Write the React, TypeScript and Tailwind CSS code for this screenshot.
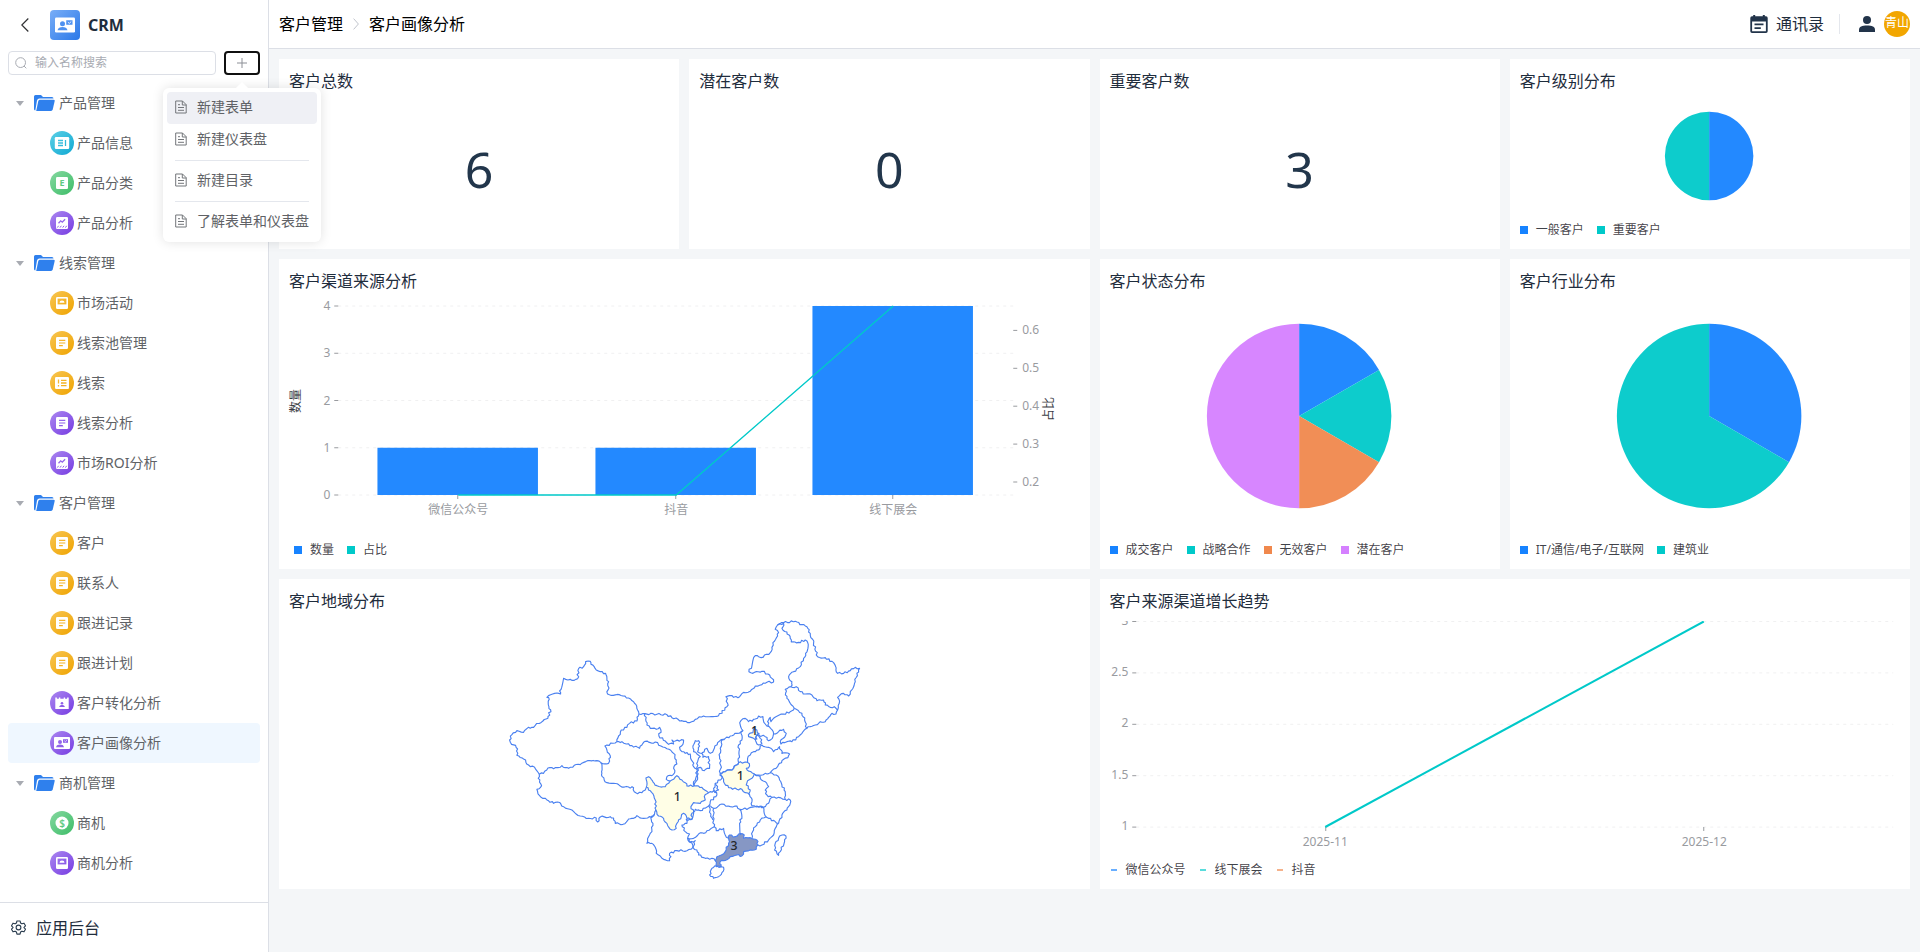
import { useState } from 'react';
import { clsx } from 'clsx';

type Tone = 'cyan' | 'green' | 'purple' | 'orange';
type Glyph = 'info' | 'letter' | 'trend' | 'board' | 'form' | 'list' | 'calendar' | 'card' | 'money';

interface MenuEntry {
  name: string;
  tone: Tone;
  glyph: Glyph;
}

interface MenuGroup {
  name: string;
  children: MenuEntry[];
}

interface LegendItem {
  name: string;
  color: string;
}

interface Slice extends LegendItem {
  value: number;
}

const BLUE = '#1783ff';
const TEAL = '#00c9c9';
const ORANGE = '#f0884d';
const PURPLE = '#d580ff';

const tones: Record<Tone, [string, string]> = {
  cyan: ['#5cd0e6', '#0fa8d2'],
  green: ['#86d8a0', '#3dbd68'],
  purple: ['#ab88f0', '#763be2'],
  orange: ['#f8c653', '#efa300'],
};

const groups: MenuGroup[] = [
  {
    name: '产品管理',
    children: [
      { name: '产品信息', tone: 'cyan', glyph: 'info' },
      { name: '产品分类', tone: 'green', glyph: 'letter' },
      { name: '产品分析', tone: 'purple', glyph: 'trend' },
    ],
  },
  {
    name: '线索管理',
    children: [
      { name: '市场活动', tone: 'orange', glyph: 'board' },
      { name: '线索池管理', tone: 'orange', glyph: 'form' },
      { name: '线索', tone: 'orange', glyph: 'list' },
      { name: '线索分析', tone: 'purple', glyph: 'form' },
      { name: '市场ROI分析', tone: 'purple', glyph: 'trend' },
    ],
  },
  {
    name: '客户管理',
    children: [
      { name: '客户', tone: 'orange', glyph: 'form' },
      { name: '联系人', tone: 'orange', glyph: 'form' },
      { name: '跟进记录', tone: 'orange', glyph: 'form' },
      { name: '跟进计划', tone: 'orange', glyph: 'form' },
      { name: '客户转化分析', tone: 'purple', glyph: 'calendar' },
      { name: '客户画像分析', tone: 'purple', glyph: 'card' },
    ],
  },
  {
    name: '商机管理',
    children: [
      { name: '商机', tone: 'green', glyph: 'money' },
      { name: '商机分析', tone: 'purple', glyph: 'board' },
    ],
  },
];

// ---------- icons ----------

function CardGlyph({ color }: { color: string }) {
  return (
    <>
      <rect x="4" y="6" width="16" height="12" rx="1" fill="#fff" />
      <circle cx="10" cy="11" r="2" fill={color} />
      <path d="M6 16.2c.4-2 2-2.7 4-2.7s3.6.7 4 2.7z" fill={color} />
      <rect x="13" y="8.2" width="5" height="3.6" fill={color} />
      <path d="M14.3 9.7l1.1 1 1.6-1.5" fill="none" stroke="#fff" strokeWidth=".7" />
    </>
  );
}

function GlyphShape({ glyph, color }: { glyph: Glyph; color: string }) {
  const sheet = <rect x="6" y="6" width="12" height="12" rx="1.2" fill="#fff" />;
  switch (glyph) {
    case 'info':
      return (
        <>
          <rect x="4.8" y="6" width="14.4" height="12" rx="1.2" fill="#fff" />
          <path d="M8 9.5h5M8 12h5M8 14.5h5M15.5 9v6" stroke={color} strokeWidth="1.3" />
        </>
      );
    case 'letter':
      return (
        <>
          {sheet}
          <text x="12" y="15.3" fontSize="9" fontWeight="700" textAnchor="middle" fill={color}>E</text>
        </>
      );
    case 'trend':
      return (
        <>
          {sheet}
          <path d="M8.5 12.2l2.2-2.4 1.6 1.4 2.8-3" fill="none" stroke={color} strokeWidth="1.3" />
          <path d="M7.3 16.6l1.3-1.8M10 16.6l1.3-1.8M12.7 16.6l1.3-1.8M15.4 16.6l1.3-1.8" stroke={color} strokeWidth="1" />
        </>
      );
    case 'board':
      return (
        <>
          {sheet}
          <rect x="7.6" y="7.6" width="8.8" height="5.8" fill={color} />
          <path d="M9.5 11.8a2.5 2.3 0 0 1 5 0z" fill="#fff" />
        </>
      );
    case 'form':
      return (
        <>
          {sheet}
          <path d="M9 9.3h6.3M9 12h6.3M9 14.7h3.8" stroke={color} strokeWidth="1.2" />
        </>
      );
    case 'list':
      return (
        <>
          <rect x="5" y="6" width="14" height="12" rx="1.2" fill="#fff" />
          <path d="M8.5 8.5v4M8.5 14v1.5M11 9.3h5.5M11 12h5.5M11 14.7h5.5" stroke={color} strokeWidth="1.3" />
        </>
      );
    case 'calendar':
      return (
        <>
          <path d="M5.3 6.5h1.6v1.3h2V6.5h1.4v1.3h3.4V6.5h1.4v1.3h2V6.5h1.6V18H5.3z" fill="#fff" />
          <circle cx="12" cy="12.2" r="1.3" fill={color} />
          <path d="M9.2 16c.3-1.5 1.4-1.9 2.8-1.9s2.5.4 2.8 1.9z" fill={color} />
        </>
      );
    case 'card':
      return <CardGlyph color={color} />;
    case 'money':
      return (
        <>
          <circle cx="12" cy="12" r="6.5" fill="#fff" />
          <text x="12" y="15.5" fontSize="10" fontWeight="600" textAnchor="middle" fill={color}>$</text>
        </>
      );
  }
}

function EntryIcon({ tone, glyph }: { tone: Tone; glyph: Glyph }) {
  const [from, to] = tones[tone];
  const id = `tone-${tone}`;
  return (
    <svg viewBox="0 0 24 24" className="size-6 shrink-0" aria-hidden="true">
      <defs>
        <linearGradient id={id} x1="0" y1="0" x2="24" y2="24" gradientUnits="userSpaceOnUse">
          <stop offset="0" stopColor={from} />
          <stop offset="1" stopColor={to} />
        </linearGradient>
      </defs>
      <circle cx="12" cy="12" r="12" fill={`url(#${id})`} />
      <GlyphShape glyph={glyph} color={`url(#${id})`} />
    </svg>
  );
}

function FolderIcon() {
  return (
    <svg viewBox="0 0 21 16" className="h-4 w-[21px] shrink-0" aria-hidden="true">
      <path d="M0 1.5Q0 0 1.5 0H7l2 2h9q1.5 0 1.5 1.5H5.5Q3.5 3.5 3 5.5L1.3 15.5Q0 15.3 0 14z" fill="#2f80ed" />
      <path d="M4.3 6Q4.7 4.7 6 4.7h13.5q1.5 0 1.2 1.4l-2 8.5Q18.3 16 17 16H2.2z" fill="#2f80ed" />
    </svg>
  );
}

function DocIcon() {
  return (
    <svg viewBox="0 0 12 14" className="h-3.5 w-3 shrink-0" fill="none" stroke="#73767a" strokeWidth="1" aria-hidden="true">
      <path d="M.7 1h6.8l3.7 3.7V13H.7zM7.3 1v4h4M3 7.500h6M3 10.300h6M3 4.700h2" />
    </svg>
  );
}

function GearIcon() {
  return (
    <svg viewBox="0 0 24 24" className="size-[15px]" fill="none" stroke="#2c3e50" strokeWidth="1.8" strokeLinejoin="round" aria-hidden="true">
      <path d="M9.5 1.5h5l.8 3.3 2.2 1.3 3.3-1 2.4 4.2-2.4 2.4v.6l2.4 2.4-2.4 4.2-3.3-1-2.2 1.3-.8 3.3h-5l-.8-3.3-2.2-1.3-3.3 1L.8 14.7l2.4-2.4v-.6L.8 9.300l2.4-4.2 3.3 1 2.2-1.3z" />
      <circle cx="12" cy="12" r="3.8" />
    </svg>
  );
}

// ---------- sidebar ----------

function CreateMenu() {
  const rows = [['新建表单', '新建仪表盘'], ['新建目录'], ['了解表单和仪表盘']];
  return (
    <div className="absolute top-full left-1/2 z-20 mt-[13px] w-max -translate-x-1/2 rounded-md bg-white p-1 shadow-[0_0_12px_rgba(0,0,0,0.12)]">
      <span className="absolute -top-1 left-1/2 size-2.5 -translate-x-1/2 rotate-45 bg-white" />
      {rows.map((section, i) => (
        <div key={section[0]} className="relative">
          {i > 0 && <hr className="mx-2 my-1 border-[#e4e7ed]" />}
          {section.map((label) => (
            <button
              key={label}
              type="button"
              className={clsx(
                'flex h-8 w-full items-center gap-2.5 rounded px-2 pb-0.5 text-sm leading-5 text-[#606266]',
                label === '新建表单' && 'bg-[#eff0f5]',
              )}
            >
              <DocIcon />
              {label}
            </button>
          ))}
        </div>
      ))}
    </div>
  );
}

function Sidebar() {
  const [active, setActive] = useState('客户画像分析');

  return (
    <aside className="flex w-[269px] shrink-0 flex-col border-r border-[#dcdfe6] bg-white">
      <div className="flex h-[50px] shrink-0 items-center gap-2 pr-2 pl-4">
        <button type="button" aria-label="返回" className="mr-2 flex w-[18px] justify-center">
          <svg viewBox="0 0 8 14" className="h-3.5 w-2" fill="none" stroke="#303133" strokeWidth="1.2" aria-hidden="true">
            <path d="M7.3.5L.8 7l6.5 6.5" />
          </svg>
        </button>
        <svg viewBox="0 0 30 30" className="size-[30px]" aria-hidden="true">
          <defs>
            <linearGradient id="logo" x1="0" y1="0" x2="1" y2="1">
              <stop offset="0" stopColor="#79aef7" />
              <stop offset="1" stopColor="#2b78e8" />
            </linearGradient>
          </defs>
          <rect width="30" height="30" rx="4" fill="url(#logo)" />
          <g transform="scale(1.25)">
            <CardGlyph color="#4f91f0" />
          </g>
        </svg>
        <span className="text-base leading-6 font-bold text-[#1f2d3d]">CRM</span>
      </div>

      <div className="mb-2 flex shrink-0 gap-2 px-2 pt-px">
        <label className="flex h-6 min-w-0 flex-1 items-center gap-2 rounded border border-[#dcdfe6] px-1.5">
          <svg viewBox="0 0 12 12" className="size-3 shrink-0" fill="none" stroke="#a8abb2" strokeWidth="1" aria-hidden="true">
            <circle cx="5.6" cy="5.6" r="4.9" />
            <path d="M9 9l2.3 2.3" />
          </svg>
          <input
            type="text"
            aria-label="输入名称搜索"
            placeholder="输入名称搜索"
            className="w-full min-w-0 text-xs leading-4 outline-none placeholder:text-[#a8abb2]"
          />
        </label>
        <div className="relative">
          <button
            type="button"
            aria-label="新建"
            aria-haspopup="menu"
            className="flex h-6 w-9 items-center justify-center rounded border-2 border-[#101010]"
          >
            <svg viewBox="0 0 10 10" className="size-2.5" stroke="#8c8f96" strokeWidth="1" aria-hidden="true">
              <path d="M5 0v10M0 5h10" />
            </svg>
          </button>
          <CreateMenu />
        </div>
      </div>

      <nav className="min-h-0 flex-1 px-2">
        {groups.map((group) => (
          <div key={group.name}>
            <button type="button" className="flex h-10 w-full items-center pl-2 text-sm leading-5 text-[#606266]">
              <svg viewBox="0 0 8 5" className="mr-2.5 h-[5px] w-2" aria-hidden="true">
                <path d="M0 0h8L4 5z" fill="#a8abb2" />
              </svg>
              <FolderIcon />
              <span className="ml-1">{group.name}</span>
            </button>
            {group.children.map((entry) => (
              <a
                key={entry.name}
                href="#"
                onClick={(e) => {
                  e.preventDefault();
                  setActive(entry.name);
                }}
                className={clsx(
                  'flex h-10 items-center gap-[3px] rounded pl-[42px] text-sm leading-5 text-[#606266]',
                  active === entry.name && 'bg-[#eff7ff]',
                )}
              >
                <EntryIcon tone={entry.tone} glyph={entry.glyph} />
                {entry.name}
              </a>
            ))}
          </div>
        ))}
      </nav>

      <button type="button" className="flex h-[50px] shrink-0 items-center gap-2.5 border-t border-[#dcdfe6] pl-[11px] text-base leading-6 text-[#1f2d3d]">
        <GearIcon />
        应用后台
      </button>
    </aside>
  );
}

// ---------- header ----------

function Header() {
  return (
    <header className="flex h-[49px] shrink-0 items-center justify-between border-b border-[#dcdfe6] bg-white px-2.5">
      <div className="flex items-center gap-2.5 text-base leading-6 text-black">
        <a href="#">客户管理</a>
        <svg viewBox="0 0 6 12" className="h-3 w-1.5" fill="none" stroke="#c0c4cc" aria-hidden="true">
          <path d="M.6.6L5.4 6 .6 11.4" />
        </svg>
        <span>客户画像分析</span>
      </div>
      <div className="flex items-center">
        <a href="#" className="flex items-center gap-2 text-base leading-6 text-[#1f2d3d]">
          <svg viewBox="0 0 18 18" className="size-[18px]" fill="#22344a" aria-hidden="true">
            <path fillRule="evenodd" d="M3.2 0h2v1.3h7.6V0h2v1.3H16q1.7 0 1.7 1.7v13.2Q17.7 18 16 18H2Q.3 18 .3 16.200V3Q.3 1.300 2 1.300h1.2zM2.100 6.500v9.7h13.8V6.500zM4.500 8.600h9v1.7h-9zM4.500 12.200h6.3v1.7H4.500z" />
          </svg>
          通讯录
        </a>
        <span className="mr-[19px] ml-[15px] h-5 w-px bg-[#e4e7ed]" />
        <svg viewBox="0 0 16 16" className="mr-[9px] size-4" fill="#22344a" aria-hidden="true">
          <circle cx="8" cy="4" r="4" />
          <path d="M0 16v-2.2C0 10.8 3 9.500 8 9.500s8 1.3 8 4.3V16z" />
        </svg>
        <button type="button" className="flex size-[26px] items-center justify-center rounded-full bg-[#f2a600] pb-0.5 text-xs leading-4 text-white">
          青山
        </button>
      </div>
    </header>
  );
}

// ---------- dashboard pieces ----------

function Card({ title, className, children }: { title: string; className?: string; children: React.ReactNode }) {
  return (
    <section className={clsx('flex min-w-0 flex-col bg-white px-2.5 pt-2.5 pb-[9px]', className)}>
      <h2 className="text-base leading-6 text-[#1f2d3d]">{title}</h2>
      {children}
    </section>
  );
}

function Stat({ value }: { value: number }) {
  return (
    <div className="flex flex-1 items-center justify-center pt-1 text-[50px] leading-[72px] text-[#22364b]">{value}</div>
  );
}

function Legend({ items, marker = 'square', className }: { items: LegendItem[]; marker?: 'square' | 'dash'; className?: string }) {
  return (
    <ul className={clsx('mt-px flex gap-[13px] text-xs leading-5 text-[#1d2129]/85', className)}>
      {items.map((item) => (
        <li key={item.name} className="flex items-center gap-2">
          <svg viewBox="0 0 8 8" className="size-2" fill={item.color} aria-hidden="true">
            {marker === 'square' ? <rect width="8" height="8" /> : <rect x="1" y="3" width="6" height="2" opacity=".65" />}
          </svg>
          {item.name}
        </li>
      ))}
    </ul>
  );
}

function Pie({ slices, height, className }: { slices: Slice[]; height: number; className: string }) {
  const radius = height * 0.375 - (height < 200 ? 3 : 0);
  const total = slices.reduce((sum, s) => sum + s.value, 0);
  const point = (v: number) => {
    const angle = (v / total) * Math.PI * 2 - Math.PI / 2;
    return `${Math.cos(angle) * radius} ${Math.sin(angle) * radius}`;
  };
  let start = 0;
  return (
    <svg className={clsx('w-full', className)} viewBox={`-99 ${-height / 2} 200 ${height}`}>
      {slices.map((s) => {
        const end = start + s.value;
        const large = s.value / total > 0.5 ? 1 : 0;
        const d = `M0 0L${point(start)}A${radius} ${radius} 0 ${large} 1 ${point(end)}Z`;
        start = end;
        return <path key={s.name} d={d} fill={s.color} fillOpacity=".95" />;
      })}
    </svg>
  );
}

const channels = [
  { name: '微信公众号', count: 1 },
  { name: '抖音', count: 1 },
  { name: '线下展会', count: 4 },
];

function ChannelChart() {
  const base = 202;
  const unit = 47.25;
  const centers = [169, 387, 604];
  return (
    <svg viewBox="0 0 790 246" className="h-[246px] w-full overflow-visible" fontSize="12">
      {[0, 1, 2, 3, 4].map((v) => {
        const y = base - v * unit;
        return (
          <g key={v}>
            <path d={`M49 ${y}H724`} stroke="#f0f0f1" strokeDasharray="3 4" />
            <path d={`M45 ${y}h4`} stroke="#999b9f" />
            <text x="41" y={y + 4} textAnchor="end" fill="#999b9f">{v}</text>
          </g>
        );
      })}
      {[0.2, 0.3, 0.4, 0.5, 0.6].map((v, i) => {
        const y = 189 - i * 37.9;
        return (
          <g key={v}>
            <path d={`M724 ${y}h4`} stroke="#999b9f" />
            <text x="733" y={y + 4} fill="#999b9f">{v}</text>
          </g>
        );
      })}
      {channels.map((c, i) => (
        <g key={c.name}>
          <rect x={centers[i] - 80.8} y={base - c.count * unit} width="160.5" height={c.count * unit} fill={BLUE} fillOpacity=".95" />
          <path d={`M${centers[i] - 0.5} ${base}v4`} stroke="#999b9f" />
          <text x={centers[i]} y="221" textAnchor="middle" fill="#999b9f">{c.name}</text>
        </g>
      ))}
      <path d={`M169 ${base}H387L604 13`} fill="none" stroke={TEAL} strokeWidth="1.4" />
      <text transform="translate(11 108) rotate(-90)" textAnchor="middle" fill="#3a3d44">数量</text>
      <text transform="translate(764 116) rotate(-90)" textAnchor="middle" fill="#3a3d44">占比</text>
    </svg>
  );
}

function TrendChart() {
  return (
    <svg viewBox="0 0 790 238" className="mt-2 h-[238px] w-full overflow-hidden" fontSize="12">
      {[3, 2.5, 2, 1.5, 1].map((v, i) => {
        const y = 0.5 + i * 51.4;
        return (
          <g key={v}>
            <path d={`M26 ${y}H783`} stroke="#f0f0f1" strokeDasharray="3 4" />
            <path d={`M22 ${y}h4`} stroke="#999b9f" />
            <text x="18" y={y + 3} textAnchor="end" fill="#999b9f">{v}</text>
          </g>
        );
      })}
      <path d="M215.5 206v4M593.5 206v4" stroke="#999b9f" />
      <text x="215" y="225" textAnchor="middle" fill="#999b9f">2025-11</text>
      <text x="594" y="225" textAnchor="middle" fill="#999b9f">2025-12</text>
      <path d="M215 206L593.5 0.5" fill="none" stroke={TEAL} strokeWidth="2" />
    </svg>
  );
}

// ---------- map ----------

// Province borders as point lists, three units to a pixel.
const borders = [
  // 新疆
  '263,153 256,155 250,170 235,176 232,206 222,211 210,208 190,205 178,243 181,252 170,249 140,262 147,268 146,290 151,299 143,325 128,333 105,346 100,352 85,352 70,367 50,362 35,374 28,390 34,403 46,406 52,417 50,436 70,447 85,465 103,472 117,493 130,490 143,474 160,476 185,467 205,475 222,466 240,464 262,452 290,452 302,458 325,460 326,446 330,437 320,420 314,408 350,395 355,378 363,360 380,352 388,340 410,333 416,312 412,300 400,275 385,264 368,258 322,252 325,215 320,205 316,190 300,185 288,180 272,163 270,154 263,153',
  // 西藏
  '117,493 114,505 124,527 110,538 118,557 140,570 160,580 172,576 190,590 215,600 240,618 265,625 288,624 292,636 300,621 330,620 340,624 345,640 368,643 385,627 400,625 410,617 430,625 447,620 455,622 463,612 467,600',
  '438,532 435,540 425,548 412,551 402,545 400,533 385,531 360,528 340,520 320,518 306,500 304,485 302,458',
  // 青海
  '350,395 365,395 378,402 395,407 418,415 428,400 435,394 450,398 465,396 482,408 500,416 520,430 528,450 530,462 520,475 524,482 515,497 500,500 498,508 510,513',
  // 甘肃
  '416,312 434,311 440,345 450,355 468,358 478,352 482,360 476,378 495,393 505,403 520,402 515,390 525,393 550,390 548,403 538,412 545,425 555,430 570,432 577,455 580,470 590,478 588,500 580,515 582,528',
  // 宁夏
  '590,478 592,455 600,440 590,432 580,425 578,408 585,392 595,392 598,408 592,425 605,430 608,442 625,440 628,475 612,482 600,472 590,478',
  // 陕西
  '592,475 592,508 582,528',
  '605,428 620,415 630,430 640,420 652,398 670,388 665,390 660,415 658,440 661,465 660,490 665,505 645,520 640,535 650,548',
  // 内蒙古
  '434,311 500,314 515,323 545,332 568,338 585,328 610,318 655,317 680,290 682,280 677,260 688,257 713,263 730,247 750,244 765,228 785,224 800,217 820,216 815,205 803,192 785,184 758,190 746,185 755,168 765,137 775,140 783,143 810,128 815,112 818,98 832,78 835,68 825,58 832,45 850,40 845,55 860,66 870,85 873,96 895,97 915,90 924,103 916,130 910,145 900,170 880,185 865,200 875,215 872,230 855,238 860,265 870,280 882,295',
  '882,295 870,305 850,312 820,325 812,335 810,322 802,335 807,350',
  // 黑龙江
  '832,45 850,38 885,34 905,44 920,50 930,70 940,100 952,140 975,143 1000,158 1007,180 1012,190 1030,190 1050,182 1065,172 1078,175 1070,190 1065,215 1050,245 1045,258 1030,250 1012,262 1017,280 1012,300 1002,290 990,292 975,285 970,270 950,272 935,255 915,252 900,245 888,230 872,230',
  // 吉林
  '1012,300 1007,312 995,310 985,322 975,335 960,335 945,345 930,350 920,355 913,330 905,310 888,298 882,295',
  // 辽宁
  '920,355 905,370 895,380 875,395 860,395 842,402 840,395 858,370 850,358 835,365 820,372 807,350',
  // 河北
  '820,372 818,380 805,392 795,380 775,375 770,372',
  '807,350 795,342 788,320 775,318 765,327 745,335 735,325 722,332 720,345 728,362 710,370 690,378 665,390',
  '770,375 780,385 785,400 775,405 766,392 770,375',
  // 山西
  '660,490 675,485 700,475 715,458 716,430 715,405 725,390 722,370 728,362',
  // 山东
  '785,405 805,412 820,425 832,418 838,410 845,430 868,432 863,443 845,452 832,470 815,482 810,488 795,490 775,495 762,492',
  '742,457 742,445 750,435 760,425 775,420 785,405',
  // 江苏
  '762,492 775,497 780,505 795,515 805,530 795,540 800,555 815,562 835,562 855,568',
  '810,488 828,495 838,510 845,525 855,545 855,568 870,570 870,580 860,600 845,615 835,640',
  // 安徽
  '748,555 755,575 755,587 775,590 790,592 805,580 815,562',
  // 浙江
  '790,592 792,610 805,625 825,635 835,640',
  // 福建
  '798,620 780,630 765,650 757,665 755,685',
  '835,640 825,655 820,675 805,690 785,705 773,705',
  // 江西
  '718,598 725,620 718,640 722,675',
  '718,598 745,595 770,588 790,592',
  // 湖北
  '645,520 655,540 645,545 650,555 630,575 625,588 640,595 665,582 690,590 710,588 718,598',
  // 湖南
  '640,595 638,620 642,650 648,662 670,655 675,675 685,685',
  // 重庆
  '625,548 640,542 650,548',
  '625,588 600,602 585,598 575,610 575,628',
  // 贵州
  '625,588 632,612 638,630',
  '642,650 610,670 595,672 580,685 562,685',
  // 广西
  '562,685 570,698 585,692 578,712 590,720 595,735 615,745 635,745 645,752',
  // 云南
  '463,612 452,625 458,640 455,665 445,680 440,700 455,700 465,712 468,730 480,738 490,748 508,752 512,740 508,730 530,722 560,722 578,712 570,695 562,685 568,672 555,665 545,645 560,640 558,628 575,628',
  // 海南
  '635,775 650,768 670,772 665,788 655,800 640,805 628,795 635,775',
  // 台湾
  '845,675 857,678 853,695 840,725 835,736 823,720 825,700 835,685 845,675',
];

const regions = [
  {
    name: '四川',
    value: 1,
    fill: '#fffee6',
    label: [531, 572],
    points: '438,532 437,504 445,500 453,508 462,520 470,527 495,530 505,520 510,513 520,508 530,497 545,510 555,518 560,528 582,528 605,532 625,548 612,560 615,570 600,580 580,578 572,590 580,605 575,628 560,625 550,610 543,620 530,640 528,655 515,660 500,640 490,625 475,618 467,600 465,570 450,542 438,532',
  },
  {
    name: '河南',
    value: 1,
    fill: '#fffee6',
    label: [720, 509],
    points: '660,490 675,485 700,475 715,458 742,457 748,468 738,475 755,488 762,492 755,505 742,512 738,525 750,540 748,555 735,548 725,538 710,538 685,533 670,515 660,490',
  },
  {
    name: '北京',
    value: 1,
    fill: '#fffee6',
    label: [763, 375],
    points: '760,355 770,360 777,372 768,378 770,387 760,385 745,380 748,370 758,368 760,355',
  },
  {
    name: '广东',
    value: 3,
    fill: '#8697c4',
    label: [701, 721],
    points: '685,685 688,675 705,680 715,672 732,675 730,685 750,683 770,690 773,705 768,718 750,720 730,725 725,738 710,735 690,740 670,752 660,755 662,770 648,770 645,752 650,740 675,725 685,700 685,685',
  },
];

// Splits each segment and nudges the joints, so that shared borders get the same ragged edge.
function ragged(points: string): string {
  const list = points.split(' ').map((p) => p.split(',').map(Number));
  const out = [list[0]];
  for (let i = 1; i < list.length; i++) {
    const [ax, ay] = list[i - 1];
    const [bx, by] = list[i];
    const len = Math.hypot(bx - ax, by - ay);
    const steps = Math.max(1, Math.round(len / 6));
    for (let k = 1; k < steps; k++) {
      const x = ax + ((bx - ax) * k) / steps;
      const y = ay + ((by - ay) * k) / steps;
      const shift = Math.sin(x * 12.9 + y * 78.2) * 2.8;
      out.push([x - ((by - ay) / len) * shift, y + ((bx - ax) / len) * shift]);
    }
    out.push([bx, by]);
  }
  return 'M' + out.map(([x, y]) => `${x.toFixed(1)} ${y.toFixed(1)}`).join('L');
}

function ChinaMap() {
  return (
    <svg viewBox="-633 9 2370 798" className="h-[266px] w-full" fontSize="37">
      <g stroke="#4a80f0" strokeWidth="3.4" strokeLinejoin="round" fill="none">
        {regions.map((r) => (
          <path key={r.name} d={ragged(r.points)} fill={r.fill} />
        ))}
        {borders.map((b) => (
          <path key={b} d={ragged(b)} />
        ))}
      </g>
      {regions.map((r) => (
        <text key={r.name} x={r.label[0]} y={r.label[1]} textAnchor="middle" fontWeight="500" fill="#26282c">
          {r.value}
        </text>
      ))}
    </svg>
  );
}

// ---------- page ----------

const levels: Slice[] = [
  { name: '一般客户', color: BLUE, value: 1 },
  { name: '重要客户', color: TEAL, value: 1 },
];

const states: Slice[] = [
  { name: '成交客户', color: BLUE, value: 1 },
  { name: '战略合作', color: TEAL, value: 1 },
  { name: '无效客户', color: ORANGE, value: 1 },
  { name: '潜在客户', color: PURPLE, value: 3 },
];

const industries: Slice[] = [
  { name: 'IT/通信/电子/互联网', color: BLUE, value: 1 },
  { name: '建筑业', color: TEAL, value: 2 },
];

export default function App() {
  return (
    <div className="flex h-screen min-h-fit bg-[#f4f6f8] font-['Noto_Sans','Noto_Sans_CJK_SC',sans-serif]">
      <Sidebar />
      <div className="flex min-w-0 flex-1 flex-col">
        <Header />
        <main className="grid grid-cols-4 gap-2.5 p-2.5">
          <Card title="客户总数"><Stat value={6} /></Card>
          <Card title="潜在客户数"><Stat value={0} /></Card>
          <Card title="重要客户数"><Stat value={3} /></Card>
          <Card title="客户级别分布">
            <Pie slices={levels} height={126} className="h-[126px]" />
            <Legend items={levels} />
          </Card>

          <Card title="客户渠道来源分析" className="col-span-2">
            <ChannelChart />
            <Legend items={[{ name: '数量', color: BLUE }, { name: '占比', color: TEAL }]} className="pl-[5px]" />
          </Card>
          <Card title="客户状态分布">
            <Pie slices={states} height={246} className="h-[246px]" />
            <Legend items={states} />
          </Card>
          <Card title="客户行业分布">
            <Pie slices={industries} height={246} className="h-[246px]" />
            <Legend items={industries} />
          </Card>

          <Card title="客户地域分布" className="col-span-2">
            <ChinaMap />
          </Card>
          <Card title="客户来源渠道增长趋势" className="col-span-2">
            <TrendChart />
            <Legend
              marker="dash"
              items={[
                { name: '微信公众号', color: BLUE },
                { name: '线下展会', color: TEAL },
                { name: '抖音', color: ORANGE },
              ]}
            />
          </Card>
        </main>
      </div>
    </div>
  );
}
